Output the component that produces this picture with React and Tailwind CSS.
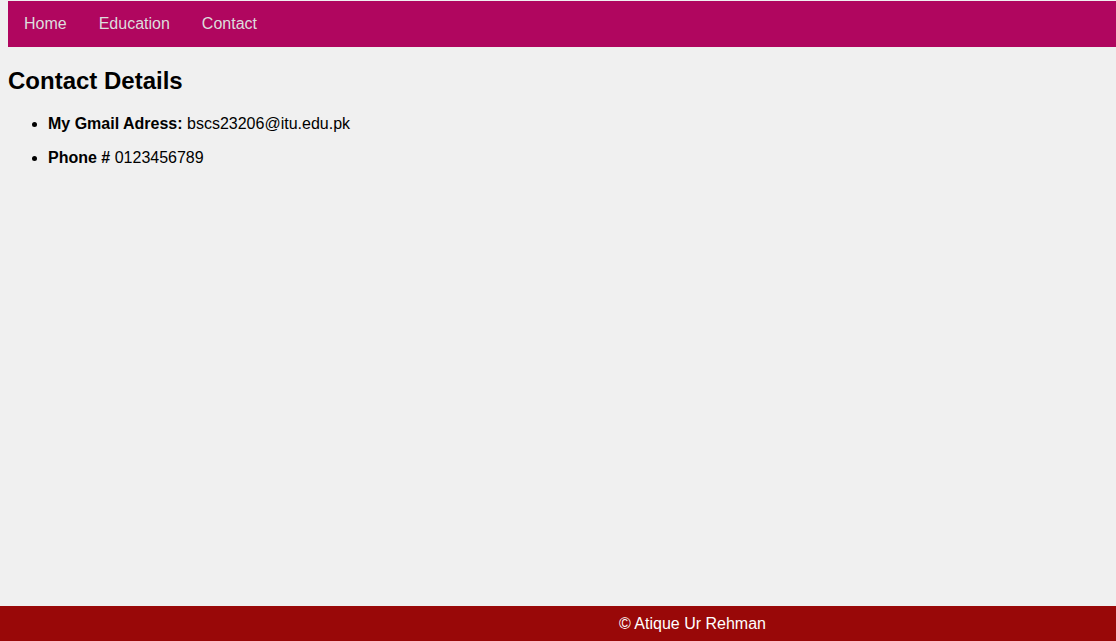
export default function App() {
  const links = ['Home', 'Education', 'Contact'];

  return (
    <div className="min-h-screen flex flex-col bg-[#f0f0f0] text-black font-['Liberation_Sans',Arial,sans-serif] text-base">
      <nav className="mt-px ml-2 h-[46px] bg-[#b0065f] flex items-center">
        {links.map((l) => (
          <a key={l} href="#" className="px-4 pb-px text-[#dddddd] leading-[18px]">
            {l}
          </a>
        ))}
      </nav>

      <main className="px-2">
        <h2 className="mt-5 mb-5 text-2xl font-bold leading-[28px]">Contact Details</h2>
        <ul className="list-disc pl-10">
          <li className="mb-4 leading-[18px]">
            <b>My Gmail Adress:</b> bscs23206@itu.edu.pk
          </li>
          <li className="mb-4 leading-[18px]">
            <b>Phone #</b> 0123456789
          </li>
        </ul>
      </main>

      <footer className="mt-auto h-[35px] bg-[#990808] text-white flex items-center justify-center pl-[269px]">
        © Atique Ur Rehman
      </footer>
    </div>
  );
}
